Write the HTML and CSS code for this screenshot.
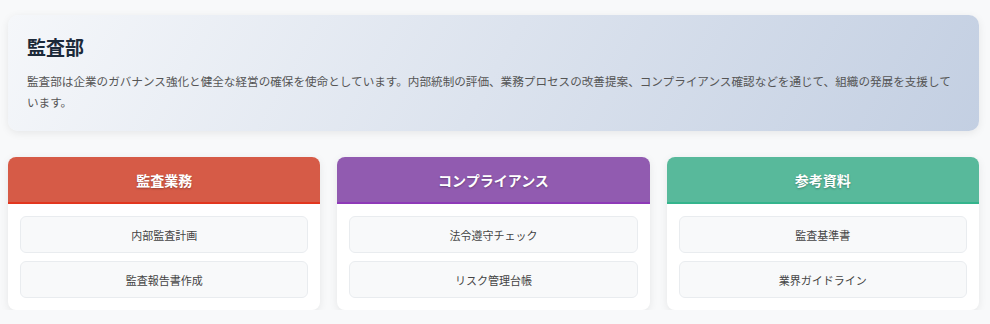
FILE: index.html
```html
<!DOCTYPE html>
<html lang="ja">
<head>
<meta charset="utf-8">
<title>監査部</title>
<link rel="stylesheet" href="styles.css">
</head>
<body>
<div class="page">
  <section class="intro">
    <h1 class="intro-title">監査部</h1>
    <p class="intro-text">監査部は企業のガバナンス強化と健全な経営の確保を使命としています。内部統制の評価、業務プロセスの改善提案、コンプライアンス確認などを通じて、組織の発展を支援しています。</p>
  </section>
  <div class="cards">
    <div class="card">
      <div class="card-head red">監査業務</div>
      <div class="card-body">
        <div class="item">内部監査計画</div>
        <div class="item">監査報告書作成</div>
      </div>
    </div>
    <div class="card">
      <div class="card-head purple">コンプライアンス</div>
      <div class="card-body">
        <div class="item">法令遵守チェック</div>
        <div class="item">リスク管理台帳</div>
      </div>
    </div>
    <div class="card">
      <div class="card-head green">参考資料</div>
      <div class="card-body">
        <div class="item">監査基準書</div>
        <div class="item">業界ガイドライン</div>
      </div>
    </div>
  </div>
</div>
</body>
</html>
```

FILE: styles.css
```css
html, body {
  margin: 0;
  padding: 0;
  background: #f8f9fa;
}
body {
  font-family: "Noto Sans CJK JP", "Noto Sans", sans-serif;
  color: #333;
}
.page {
  width: 971px;
  padding: 15px 0 0 8px;
}
.intro {
  background: linear-gradient(120deg, #f5f7fa 0%, #c3cfe2 100%);
  border-radius: 10px;
  padding: 20px 18px 18px 19px;
  box-shadow: 0 2px 8px rgba(0, 0, 0, 0.08);
}
.intro-title {
  margin: 0 0 12px 0;
  font-size: 19px;
  line-height: 24px;
  font-weight: 700;
  color: #1c2a3a;
}
.intro-text {
  margin: 0;
  font-size: 11.6px;
  line-height: 21px;
  color: #555;
}
.cards {
  display: grid;
  grid-template-columns: repeat(3, 1fr);
  gap: 17px;
  margin-top: 26px;
}
.card {
  background: #fff;
  border-radius: 8px;
  overflow: hidden;
  box-shadow: 0 2px 8px rgba(0, 0, 0, 0.08);
}
.card-head {
  height: 45px;
  display: flex;
  align-items: center;
  justify-content: center;
  color: #fff;
  font-size: 14px;
  font-weight: 700;
  text-shadow: 0 1px 2px rgba(0, 0, 0, 0.3);
  border-bottom: 2px solid;
}
.red { background: #d65b47; border-bottom-color: #e2361e; }
.purple { background: #915bb0; border-bottom-color: #8e3ab8; }
.green { background: #58b99b; border-bottom-color: #34b48c; }
.card-body {
  padding: 12px;
  display: flex;
  flex-direction: column;
  gap: 8px;
}
.item {
  background: #f8f9fa;
  border: 1px solid #e9ecef;
  border-radius: 6px;
  height: 35px;
  display: flex;
  align-items: center;
  justify-content: center;
  font-size: 11px;
  color: #444;
}
```
